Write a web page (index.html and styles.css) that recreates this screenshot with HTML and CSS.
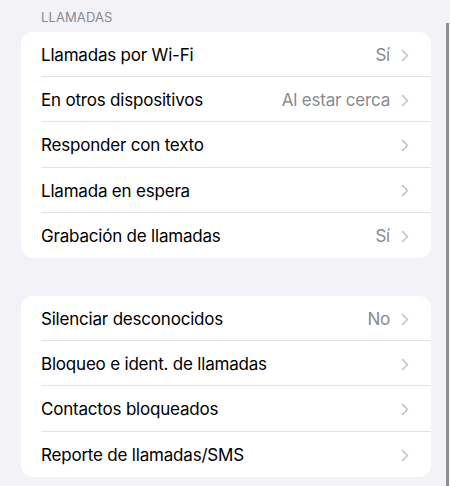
FILE: index.html
```html
<!DOCTYPE html>
<html lang="es">
<head>
<meta charset="utf-8">
<link rel="stylesheet" href="styles.css">
</head>
<body>
<div class="page">
  <div class="header">LLAMADAS</div>
  <div class="card">
    <div class="row"><span class="label">Llamadas por Wi-Fi</span><span class="value">Sí</span><svg class="chev" viewBox="0 0 8 13"><path d="M1.5 1.5 L6.5 6.5 L1.5 11.5"/></svg></div>
    <div class="row"><span class="label">En otros dispositivos</span><span class="value">Al estar cerca</span><svg class="chev" viewBox="0 0 8 13"><path d="M1.5 1.5 L6.5 6.5 L1.5 11.5"/></svg></div>
    <div class="row"><span class="label">Responder con texto</span><span class="value"></span><svg class="chev" viewBox="0 0 8 13"><path d="M1.5 1.5 L6.5 6.5 L1.5 11.5"/></svg></div>
    <div class="row"><span class="label">Llamada en espera</span><span class="value"></span><svg class="chev" viewBox="0 0 8 13"><path d="M1.5 1.5 L6.5 6.5 L1.5 11.5"/></svg></div>
    <div class="row"><span class="label">Grabación de llamadas</span><span class="value">Sí</span><svg class="chev" viewBox="0 0 8 13"><path d="M1.5 1.5 L6.5 6.5 L1.5 11.5"/></svg></div>
  </div>
  <div class="card second">
    <div class="row"><span class="label">Silenciar desconocidos</span><span class="value">No</span><svg class="chev" viewBox="0 0 8 13"><path d="M1.5 1.5 L6.5 6.5 L1.5 11.5"/></svg></div>
    <div class="row"><span class="label">Bloqueo e ident. de llamadas</span><span class="value"></span><svg class="chev" viewBox="0 0 8 13"><path d="M1.5 1.5 L6.5 6.5 L1.5 11.5"/></svg></div>
    <div class="row"><span class="label">Contactos bloqueados</span><span class="value"></span><svg class="chev" viewBox="0 0 8 13"><path d="M1.5 1.5 L6.5 6.5 L1.5 11.5"/></svg></div>
    <div class="row"><span class="label">Reporte de llamadas/SMS</span><span class="value"></span><svg class="chev" viewBox="0 0 8 13"><path d="M1.5 1.5 L6.5 6.5 L1.5 11.5"/></svg></div>
  </div>
  <div class="scrollbar"></div>
</div>
</body>
</html>
```
FILE: styles.css
```css
html, body {
  margin: 0;
  padding: 0;
  background: #f2f2f7;
}
body {
  font-family: Inter, "Noto Sans", "Liberation Sans", sans-serif;
  color: #000;
  width: 450px;
  height: 486px;
  overflow: hidden;
}
.page {
  position: relative;
  height: 486px;
  padding: 9px 19px 0 21px;
  box-sizing: border-box;
}
.header {
  font-size: 13px;
  color: #8a8a8e;
  padding-left: 20px;
  height: 23px;
  line-height: 17px;
  letter-spacing: 0.1px;
}
.card {
  background: #fff;
  border-radius: 12px;
  padding-left: 20px;
}
.card.second {
  margin-top: 38px;
}
.row {
  display: flex;
  align-items: center;
  height: 45.2px;
  padding-top: 2px;
  padding-right: 22px;
  border-bottom: 1px solid #e3e3e6;
  box-sizing: border-box;
}
.row:last-child {
  border-bottom: none;
}
.label {
  flex: 1;
  font-size: 17px;
  letter-spacing: -0.2px;
}
.value {
  font-size: 17px;
  color: #8a8a8e;
  margin-right: 11px;
  letter-spacing: -0.2px;
}
.chev {
  width: 8px;
  height: 13px;
  fill: none;
  stroke: #c4c4c7;
  stroke-width: 1.7;
  stroke-linecap: round;
  stroke-linejoin: round;
}
.scrollbar {
  position: absolute;
  left: 446px;
  top: 23px;
  width: 3px;
  bottom: 0;
  background: #8e8e93;
}
```
